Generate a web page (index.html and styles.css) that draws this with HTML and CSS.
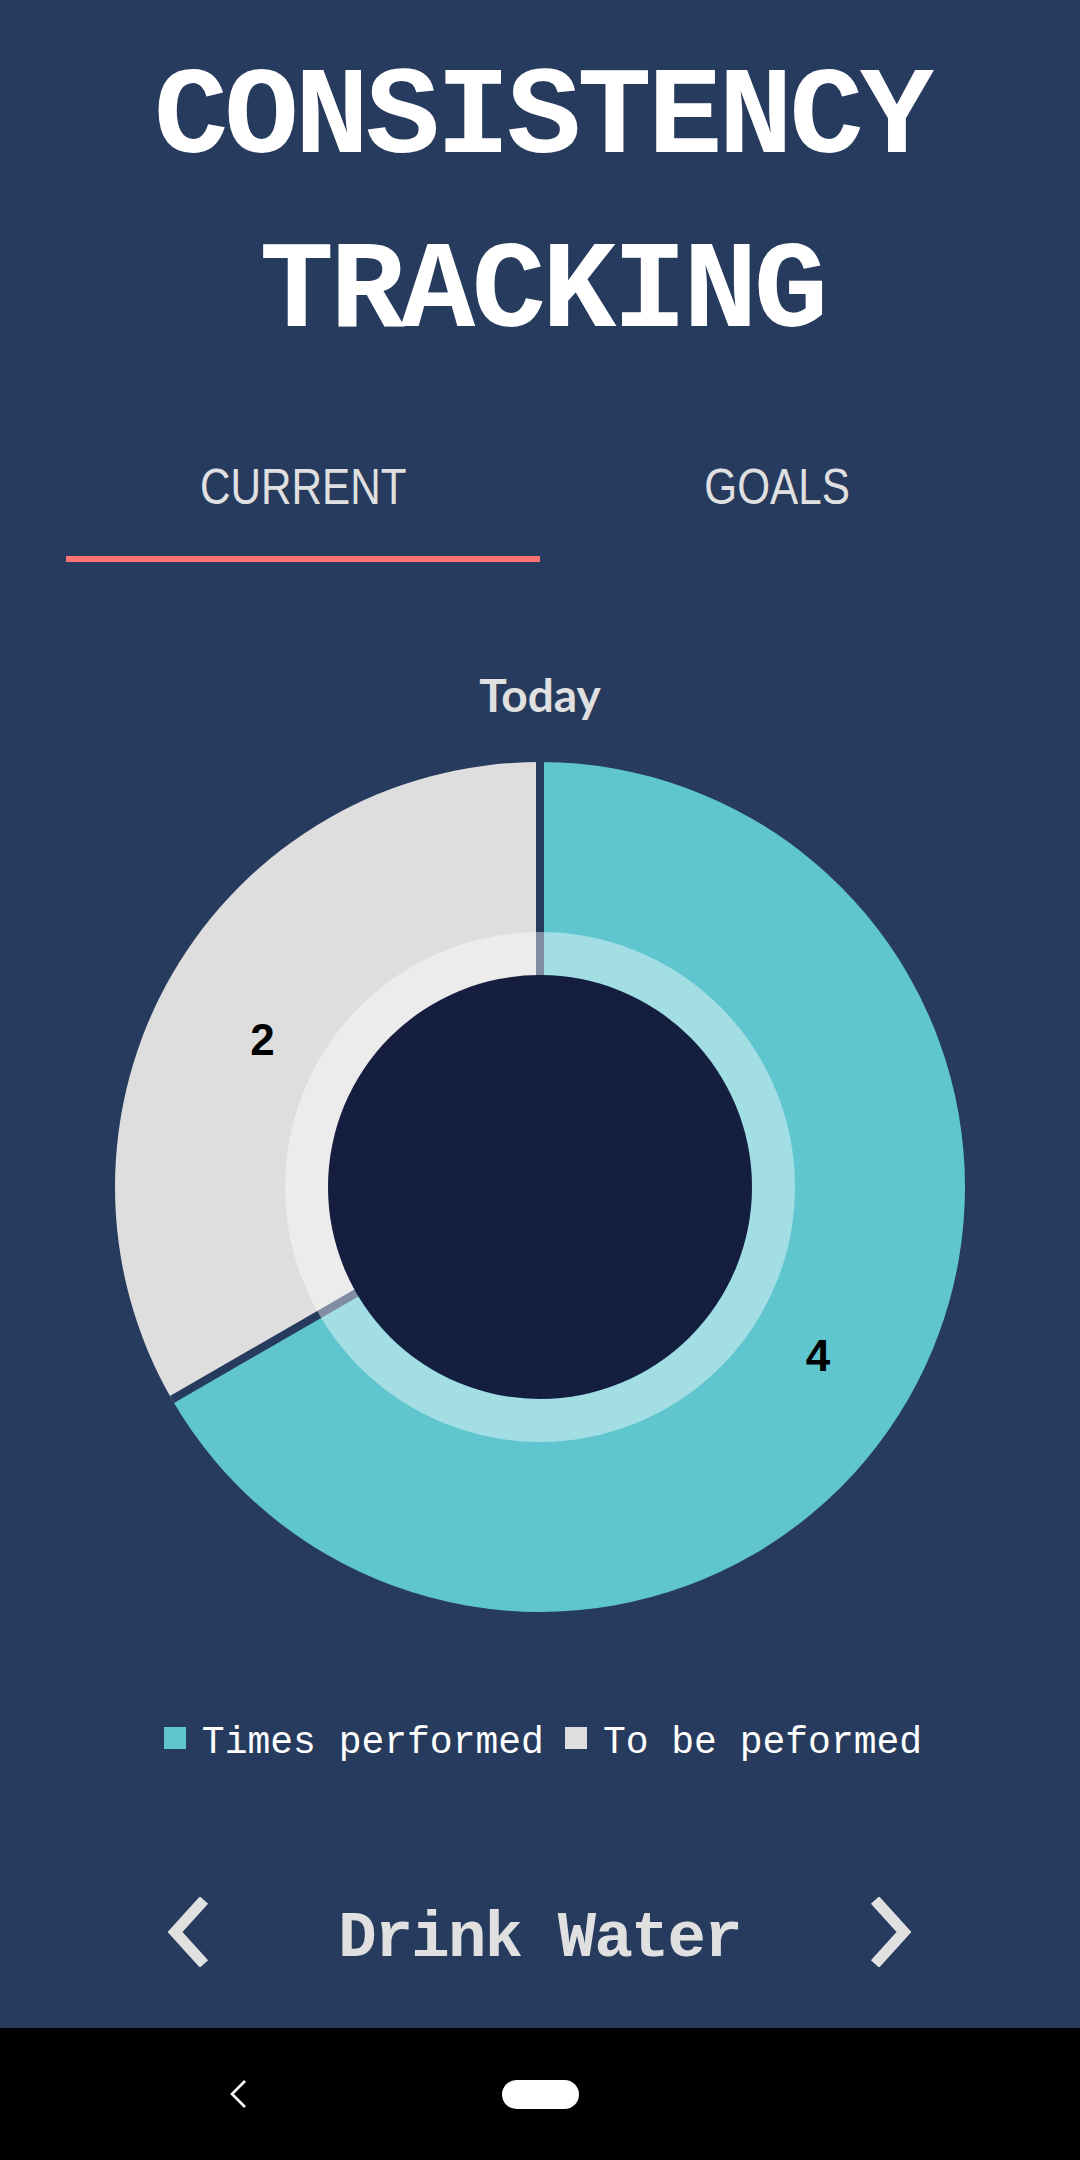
FILE: index.html
```html
<!DOCTYPE html>
<html lang="en">
<head>
<meta charset="utf-8">
<title>Consistency Tracking</title>
<link rel="stylesheet" href="styles.css">
</head>
<body>
<div class="screen">
  <main class="app">
    <h1 class="title">CONSISTENCY<br>TRACKING</h1>

    <nav class="tabs">
      <div class="tab tab-active"><span class="tab-label">CURRENT</span></div>
      <div class="tab"><span class="tab-label">GOALS</span></div>
    </nav>

    <h2 class="period">Today</h2>

    <div class="chart">
      <svg class="donut" width="850" height="850" viewBox="0 0 850 850">
        <path class="seg-done" d="M425,425 L425,0 A425,425 0 1 1 56.94,637.5 Z"/>
        <path class="seg-todo" d="M425,425 L56.94,637.5 A425,425 0 0 1 425,0 Z"/>
        <line class="sep" x1="425" y1="425" x2="425" y2="0"/>
        <line class="sep" x1="425" y1="425" x2="56.94" y2="637.5"/>
        <circle class="ring" cx="425" cy="425" r="233.5"/>
        <circle class="hole" cx="425" cy="425" r="212"/>
        <text class="seg-label" x="147.5" y="293" text-anchor="middle">2</text>
        <text class="seg-label" x="703" y="609" text-anchor="middle">4</text>
      </svg>
    </div>

    <div class="legend">
      <div class="legend-item"><span class="swatch swatch-done"></span><span class="legend-text">Times performed</span></div>
      <div class="legend-item"><span class="swatch swatch-todo"></span><span class="legend-text">To be peformed</span></div>
    </div>

    <div class="habit-nav">
      <svg class="chev" width="44" height="70" viewBox="0 0 44 70"><polyline points="38,3 9,35 38,67"/></svg>
      <div class="habit-name">Drink Water</div>
      <svg class="chev" width="44" height="70" viewBox="0 0 44 70"><polyline points="6,3 35,35 6,67"/></svg>
    </div>
  </main>

  <footer class="sysbar">
    <div class="sys-left">
      <svg class="sys-back" width="18" height="28" viewBox="0 0 18 28"><polyline points="16,1 3,14 16,27"/></svg>
    </div>
    <div class="sys-home"></div>
    <div class="sys-right"></div>
  </footer>
</div>
</body>
</html>
```

FILE: styles.css
```css
html, body {
  margin: 0;
  padding: 0;
}

body {
  width: 1080px;
  height: 2160px;
  background: #273b5e;
  font-family: "Liberation Sans", Arial, sans-serif;
}

.screen {
  display: flex;
  flex-direction: column;
  height: 2160px;
}

.app {
  flex: 1;
  display: flex;
  flex-direction: column;
  background: #273b5e;
}

.title {
  margin: 32px 0 0 0;
  font-family: "Liberation Mono", "DejaVu Sans Mono", monospace;
  font-weight: 700;
  font-size: 124px;
  line-height: 174px;
  letter-spacing: -3.8px;
  text-align: center;
  color: #ffffff;
  padding-left: 4px;
}

.tabs {
  display: flex;
  margin-top: 79px;
  padding: 0 66px;
}

.tab {
  flex: 1;
  text-align: center;
  font-family: "Liberation Sans", Arial, sans-serif;
  font-size: 50px;
  line-height: 56px;
  color: #e0e0e0;
  padding-bottom: 41px;
  border-bottom: 6px solid transparent;
}

.tab-label {
  display: inline-block;
  transform: scaleX(0.845);
}

.tab-active {
  border-bottom-color: #ff7373;
}

.period {
  margin: 105px 0 0 0;
  font-family: Lato, "Open Sans", sans-serif;
  font-weight: 700;
  font-size: 46px;
  line-height: 56px;
  text-align: center;
  color: #e0e0e0;
}

.chart {
  display: flex;
  justify-content: center;
  margin-top: 39px;
}

.donut {
  display: block;
}

.seg-done { fill: #5fc6d0; }
.seg-todo { fill: #dedede; }

.sep {
  stroke: #273b5e;
  stroke-width: 8;
}

.ring {
  fill: none;
  stroke: #ffffff;
  stroke-opacity: 0.42;
  stroke-width: 43;
}

.hole { fill: #161e40; }

.seg-label {
  font-family: "Liberation Sans", Arial, sans-serif;
  font-weight: 700;
  font-size: 44px;
  fill: #000000;
}

.legend {
  display: flex;
  justify-content: center;
  gap: 21px;
  margin-top: 109px;
  padding-left: 6px;
}

.legend-item {
  display: flex;
  align-items: flex-start;
  gap: 16px;
}

.swatch {
  width: 22px;
  height: 22px;
  margin-top: 6px;
  flex: none;
}

.swatch-done { background: #5fc6d0; }
.swatch-todo { background: #dedede; }

.legend-text {
  font-family: "Liberation Mono", "DejaVu Sans Mono", monospace;
  font-size: 38px;
  line-height: 44px;
  color: #ffffff;
  white-space: pre;
}

.habit-nav {
  display: flex;
  justify-content: space-between;
  align-items: flex-start;
  margin-top: 132px;
  padding: 0 167px 0 166px;
}

.chev polyline {
  fill: none;
  stroke: #e0e0e0;
  stroke-width: 11;
  stroke-linejoin: miter;
}

.habit-name {
  margin-top: 7px;
  font-family: "Liberation Mono", "DejaVu Sans Mono", monospace;
  font-weight: 700;
  font-size: 64px;
  line-height: 70px;
  letter-spacing: -1.8px;
  color: #e0e0e0;
}

.sysbar {
  height: 132px;
  flex: none;
  background: #000000;
  display: grid;
  grid-template-columns: 1fr 77px 1fr;
  align-items: center;
}

.sys-left {
  padding-left: 229px;
  display: flex;
}

.sys-back polyline {
  fill: none;
  stroke: #ffffff;
  stroke-width: 2.6;
}

.sys-home {
  width: 77px;
  height: 29px;
  border-radius: 15px;
  background: #ffffff;
}
```
